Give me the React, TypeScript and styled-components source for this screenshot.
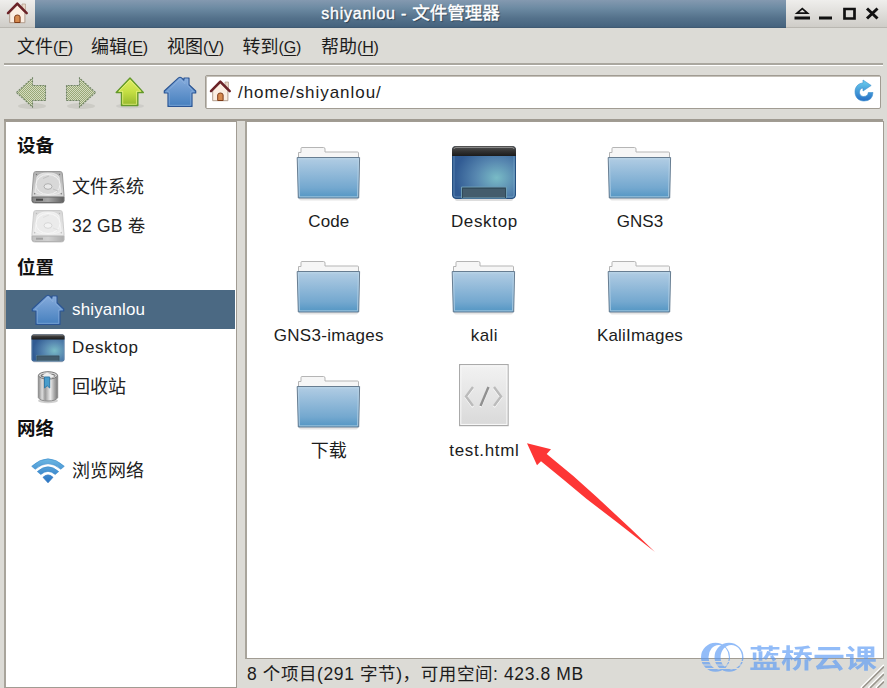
import React from "react";
import styled, { createGlobalStyle } from "styled-components";

const Global = createGlobalStyle`
  * { box-sizing: border-box; }
  body { margin: 0; background: #dcdad5; }
`;

const Window = styled.div`
  position: relative;
  width: 887px;
  height: 688px;
  overflow: hidden;
  display: flex;
  flex-direction: column;
  background: #dcdbd6;
  color: #1c1c1c;
  font-family: "Liberation Sans", "Noto Sans CJK SC", sans-serif;
  font-size: 17px;
  line-height: 24px;
  white-space: nowrap;
`;
const TitleBar = styled.header`
  flex: none;
  height: 28px;
  display: flex;
  border-bottom: 1px solid #b9b7b1;
  background: linear-gradient(#efeeec, #cfcdc8);
`;
const AppBadge = styled.div`
  width: 35px;
  padding: 1px 0 0 6px;
  line-height: 0;
`;
const TitleText = styled.div`
  flex: 1;
  height: 28px;
  text-align: center;
  line-height: 26px;
  font-size: 16px;
  letter-spacing: 0.75px;
  color: #fff;
  -webkit-text-stroke: 0.4px #fff;
  text-shadow: 1px 1px 1px #26394b;
  background: linear-gradient(#8499b0, #6c8aa2 30%, #54718b 65%, #46647f 94%, #3d566d);
`;
const TitleCjk = styled.span`
  font-size: 17.5px;
  letter-spacing: 0;
`;
const Controls = styled.div`
  width: 101px;
  line-height: 0;
`;
const MenuBar = styled.nav`
  flex: none;
  height: 38px;
  margin: 0 4px;
  padding: 7px 0 0 13px;
  display: flex;
  border-bottom: 1px solid #fff;
  box-shadow: inset 0 -2px #aaa79f;
`;
const MenuItem = styled.span<{ $w: number }>`
  width: ${(p) => p.$w}px;
  font-size: 18px;
`;
const Key = styled.span`
  font-size: 16px;
  letter-spacing: -0.2px;
  u { text-underline-offset: 2px; text-decoration-thickness: 1px; }
`;
const ToolBar = styled.div`
  flex: none;
  height: 55px;
  margin: 0 4px;
  padding: 9px 2px 0 11px;
  display: flex;
  border-bottom: 2px solid #9f9a91;
`;
const ToolIcon = styled.span<{ $w: number }>`
  width: ${(p) => p.$w}px;
  line-height: 0;
`;
const PathEntry = styled.div`
  flex: 1;
  height: 34px;
  display: flex;
  align-items: flex-start;
  padding: 3px 6px 0 3px;
  background: #fff;
  border: 1px solid #a19c93;
  border-radius: 2px;
  box-shadow: inset 1px 1px #c5c1b9;
`;
const PathText = styled.span`
  flex: 1;
  padding: 2px 0 0 6px;
  letter-spacing: 0.95px;
`;
const Body = styled.div`
  flex: 1;
  min-height: 0;
  display: flex;
  padding: 0 3px 0 4px;
`;
const SidePane = styled.aside`
  width: 233px;
  margin-right: 8px;
  padding-top: 1px;
  background: #fff;
  border: 1px solid #a19c93;
  border-left: 2px solid #a8a49b;
`;
const Heading = styled.h2`
  margin: 0;
  height: 45px;
  padding-left: 11px;
  font-size: 18.5px;
  font-weight: 700;
  line-height: 46px;
  color: #111;
`;
const PlaceRow = styled.div<{ $active?: boolean }>`
  height: 38.7px;
  margin-right: 1px;
  padding-left: 25px;
  display: flex;
  align-items: center;
  background: ${(p) => (p.$active ? "#4b6983" : "transparent")};
  color: ${(p) => (p.$active ? "#fff" : "#222")};
`;
const PlaceIcon = styled.span`
  display: flex;
  align-items: center;
  width: 34px;
  height: 34px;
  margin-right: 7px;
`;
const Label = styled.span<{ $size?: number; $gap?: number }>`
  font-size: ${(p) => p.$size ?? 17}px;
  letter-spacing: ${(p) => p.$gap ?? 0}px;
`;
const Main = styled.div`
  flex: 1;
  display: flex;
  flex-direction: column;
`;
const FilePane = styled.main`
  height: 538px;
  padding: 18px 0 0 4px;
  display: grid;
  grid-template-columns: repeat(3, 155.6px);
  grid-auto-rows: 114.3px;
  align-content: start;
  background: #fff;
  border: 1px solid #a19c93;
  border-left: 2px solid #a8a49b;
`;
const FileItem = styled.div`
  display: flex;
  flex-direction: column;
  align-items: center;
`;
const FileArt = styled.span`
  display: flex;
  flex-direction: column;
  justify-content: flex-end;
  height: 70px;
  padding-bottom: 8px;
  svg { flex: none; }
`;
const Status = styled.footer`
  flex: 1;
  padding: 3px 0 0 2px;
  font-size: 17.5px;
  letter-spacing: 0.6px;
`;
const Pointer = styled.svg`
  position: absolute;
  left: 520px;
  top: 435px;
`;
const Grip = styled.svg`
  position: absolute;
  right: 3px;
  bottom: 0;
`;
const Brand = styled.div`
  position: absolute;
  left: 700px;
  top: 641px;
  display: flex;
  color: #5a9af5;
  opacity: 0.66;
`;
const BrandText = styled.span`
  padding-left: 5px;
  font-family: "Noto Sans CJK SC", sans-serif;
  font-size: 32px;
  font-weight: 700;
  line-height: 32px;
  transform: scaleY(0.8);
`;

const Cottage = ({ size = 23 }: { size?: number }) => (
  <svg width={size} height={size} viewBox="0 0 23 23">
    <path d="M16 3h3.5v8H16z" fill="#ead8c8" stroke="#b39d8c" strokeWidth=".7" />
    <path d="M3.7 11.5 11.3 4l7.6 7.5v10.2H3.7z" fill="#fbeee2" stroke="#aa9484" strokeWidth=".9" />
    <path d="M2 12.2 11.3 2.7l9.4 9.5" fill="none" stroke="#6b2227" strokeWidth="2.5" strokeLinecap="round" strokeLinejoin="round" />
    <path d="M8.7 21.5V16q0-2 2.7-2t2.7 2v5.5z" fill="#d58a4f" stroke="#7e3c18" />
  </svg>
);

const BlueHome = () => (
  <svg width="34" height="34" viewBox="0 0 34 34">
    <defs>
      <linearGradient id="homeFill" x2="0" y2="1"><stop stopColor="#87acdc" /><stop offset="1" stopColor="#457fbe" /></linearGradient>
    </defs>
    <path d="M5 31.5V18H1.3V16L15.5 2.9Q17 1.6 18.6 2.9L21 5.2V3H26V9.8L32.7 16V18H29V31.5Z" fill="url(#homeFill)" stroke="#2b5594" strokeWidth="1.2" strokeLinejoin="round" />
    <path d="M6.2 30.3V16.8H3.6L17 4.2 22 8.8V4.2H24.8V10.4L30.5 16.8H27.8V30.3Z" fill="none" stroke="#91b4df" strokeOpacity=".6" />
  </svg>
);

const HatchArrow = ({ flip }: { flip?: boolean }) => (
  <svg width="34" height="36" viewBox="0 0 34 36">
    <defs>
      <pattern id="dots" width="2" height="2" patternUnits="userSpaceOnUse">
        <path fill="#d6dcc0" d="M0 0h2v2H0z" /><path fill="#98a877" d="M0 0h1v1H0zM1 1h1v1H1z" />
      </pattern>
    </defs>
    <ellipse cx="17" cy="31" rx="14" ry="3" fill="#8b8b84" opacity=".2" />
    <path transform={flip ? "translate(33 0) scale(-1 1)" : undefined} d="M1.5 17.5 17.5 3V10.5H30.5V25.5H17.5V32Z" fill="url(#dots)" stroke="#718466" strokeWidth="1.1" strokeDasharray="2 1" />
  </svg>
);

const UpArrow = () => (
  <svg width="34" height="36" viewBox="0 0 34 36">
    <defs>
      <linearGradient id="upFill" x2="0" y2="1"><stop stopColor="#dfed65" /><stop offset=".5" stopColor="#c5df43" /><stop offset="1" stopColor="#94b72c" /></linearGradient>
    </defs>
    <ellipse cx="17" cy="31" rx="14" ry="2.6" fill="#777" opacity=".15" />
    <path d="M17 3 30.3 17.5H24.8V30.5H8.5V17.5H3.2Z" fill="url(#upFill)" stroke="#63992a" strokeWidth="1.4" strokeLinejoin="round" />
    <path d="M17 5.1 27.8 16.3H23.6V29.3H9.7V16.3H5.9Z" fill="none" stroke="#eff78b" strokeOpacity=".7" />
  </svg>
);

const Reload = () => (
  <svg width="22" height="24" viewBox="0 0 22 24">
    <defs><linearGradient id="loadFill" x2="0" y2="1"><stop stopColor="#6bd0ef" /><stop offset="1" stopColor="#266fc5" /></linearGradient></defs>
    <path transform="translate(1 -.5)" d="M10 1.5 18.2 7 10 12.5V9.5C5 10 5.5 18 10.5 18Q15 17.8 15.3 14H20Q19.5 22.5 11 22.5C5.3 22.5 2 18.5 2 13.2 2 8.4 5.3 4.7 10 4.5Z" fill="url(#loadFill)" stroke="#3d91cf" strokeWidth=".6" />
  </svg>
);

const WindowButtons = () => (
  <svg width="101" height="27" viewBox="0 0 101 27" fill="none" stroke="#111">
    <path d="M11 13.2 16.3 8.6 21.5 13.2Z" strokeWidth="1.7" />
    <path d="M8.5 18H24M33 18H46" strokeWidth="3" />
    <path d="M58.5 9H68.5V18.5H58.5Z" strokeWidth="2.7" />
    <path d="M81 8.5 91.5 18.5M91.5 8.5 81 18.5" strokeWidth="3" />
  </svg>
);

const Disk = ({ pale }: { pale?: boolean }) => (
  <svg width="34" height="34" viewBox="0 0 34 34" opacity={pale ? 0.5 : 1}>
    <defs>
      <linearGradient id="diskTop" x2="0" y2="1"><stop stopColor="#b0b0b0" /><stop offset="1" stopColor="#e4e4e4" /></linearGradient>
      <linearGradient id="diskFront"><stop stopColor="#858585" /><stop offset=".5" stopColor="#a6a6a6" /><stop offset="1" stopColor="#606060" /></linearGradient>
    </defs>
    <path d="M4.5 1.5H29.5Q31.2 1.5 31.4 4L33 25V31Q33 33 30.5 33H3.5Q1 33 1 31V25L2.6 4Q2.8 1.5 4.5 1.5Z" fill="url(#diskTop)" stroke="#999" />
    <path d="M1.2 27H32.8V30.5Q32.8 32.5 30.5 32.5H3.5Q1.2 32.5 1.2 30.5Z" fill="url(#diskFront)" stroke="#686868" />
    <path d="M5 29.7h7" stroke="#444" strokeWidth="2" />
    <path d="M6 7Q8.5 2.8 17 3 25.5 2.8 28 7L30 22Q27 25 17 25T4 22Z" fill="#dcdcdc" stroke="#f0f0f0" strokeWidth=".7" />
    <ellipse cx="17" cy="14.5" rx="12" ry="10" fill="#d8d8d8" stroke="#f2f2f2" />
    <ellipse cx="17" cy="16.5" rx="4" ry="2.8" fill="#e8e8e8" stroke="#b0b0b0" />
    <path d="M12 8.5 18 6M22 19 27 21" stroke="#c2c2c2" />
    <g fill="#777"><circle cx="5.5" cy="4.5" r=".7" /><circle cx="28.5" cy="4.5" r=".7" /><circle cx="3.7" cy="23.8" r=".7" /><circle cx="30.3" cy="23.8" r=".7" /></g>
  </svg>
);

const DesktopArt = ({ width = 66, height = 57 }: { width?: number; height?: number }) => (
  <svg width={width} height={height} viewBox="0 0 66 57" preserveAspectRatio="none">
    <defs>
      <radialGradient id="deskFill" cx=".7" cy=".6" r=".66"><stop stopColor="#79bbc6" /><stop offset=".5" stopColor="#5787b0" /><stop offset="1" stopColor="#315b93" /></radialGradient>
      <linearGradient id="deskBar" x2="0" y2="1"><stop stopColor="#555" /><stop offset=".5" stopColor="#343434" /><stop offset="1" stopColor="#1b1b1b" /></linearGradient>
    </defs>
    <rect x="4" y="51" width="58" height="5" rx="2" fill="#555" opacity=".2" />
    <rect x="1.5" y="1.5" width="63" height="52" rx="3.5" fill="url(#deskFill)" stroke="#254f7f" />
    <rect x="3" y="3" width="60" height="49" rx="2" fill="none" stroke="#9fc9df" strokeOpacity=".35" />
    <path d="M1 11V5Q1 1 5 1H61Q65 1 65 5V11Z" fill="url(#deskBar)" />
    <path d="M3 4Q3 2.5 5 2.5H61Q63 2.5 63 4" fill="none" stroke="#888" />
    <path d="M10.5 53V42H55.5V53Z" fill="#435c6c" stroke="#6d9cb4" />
    <path d="M11.5 53V43.3H54.5V53" fill="none" stroke="#304958" />
  </svg>
);

const Trash = () => (
  <svg width="34" height="34" viewBox="0 0 34 34">
    <defs><linearGradient id="canFill"><stop stopColor="#888" /><stop offset=".2" stopColor="#ddd" /><stop offset=".35" stopColor="#999" /><stop offset=".62" stopColor="#ececec" /><stop offset=".82" stopColor="#aaa" /><stop offset="1" stopColor="#777" /></linearGradient></defs>
    <ellipse cx="17" cy="30.7" rx="10" ry="2.5" fill="#444" opacity=".25" />
    <path d="M7.3 5.5V27.5Q9 31 17 31T26.7 27.5V5.5Z" fill="url(#canFill)" stroke="#8d8d8d" />
    <ellipse cx="17" cy="5.4" rx="9.5" ry="3.7" fill="#d6d6d6" stroke="#777" />
    <ellipse cx="17" cy="5.7" rx="7.5" ry="2.3" fill="#777" />
    <path d="M11 5.5 16 2.5 24 6 20 8 14 7Z" fill="#eee" />
    <path d="M13.5 7H18.7V18L16.2 15.7 13.5 18Z" fill="#489dcc" stroke="#337aa7" />
  </svg>
);

const Wifi = () => (
  <svg width="34" height="34" viewBox="0 0 34 34" fill="none">
    <defs><linearGradient id="waveFill" gradientUnits="userSpaceOnUse" x1="0" y1="3" x2="0" y2="30"><stop stopColor="#70bce5" /><stop offset="1" stopColor="#246fc1" /></linearGradient></defs>
    <path d="M.7 12.3Q17-2.7 33.3 12.3L29.8 15.2Q17 4.2 4.2 15.2Z" fill="url(#waveFill)" stroke="#398acb" strokeWidth=".6" />
    <path d="M6.3 17.6Q17 8 27.7 17.6L24.2 20.5Q17 14.3 9.8 20.5Z" fill="url(#waveFill)" stroke="#398acb" strokeWidth=".6" />
    <path d="M12 23.3Q17 18.5 22 23.3L17 28.8Z" fill="url(#waveFill)" stroke="#256fbb" strokeWidth=".7" />
  </svg>
);

const Folder = () => (
  <svg width="66" height="57" viewBox="0 0 66 57">
    <defs>
      <linearGradient id="folderFill" x2="0" y2="1"><stop stopColor="#b2cde4" /><stop offset=".75" stopColor="#74a8cf" /><stop offset="1" stopColor="#5295c3" /></linearGradient>
    </defs>
    <rect x="3" y="51" width="59" height="4.5" rx="2" fill="#555" opacity=".16" />
    <path d="M2.5 14V7.5H5V3.5Q5 2.5 6 2.5H27.5Q29 2.5 29 4V7H61.5Q62.5 7 62.5 8V14Z" fill="#f6f6f6" stroke="#b5b5b5" />
    <path d="M1.2 12.5H63.6L62.7 53H2.3Z" fill="url(#folderFill)" stroke="#677d91" />
    <path d="M2.4 13.8H62.4L61.5 51.8H3.5Z" fill="none" stroke="#c0d9ea" strokeOpacity=".65" />
  </svg>
);

const HtmlDoc = () => (
  <svg width="66" height="70" viewBox="0 0 66 70">
    <defs><linearGradient id="docFill" x2="0" y2="1"><stop stopColor="#f2f2f2" /><stop offset="1" stopColor="#d9d9d9" /></linearGradient></defs>
    <rect x="8.6" y="3.6" width="48.5" height="61" fill="url(#docFill)" stroke="#aaa" strokeWidth="1.2" />
    <rect x="9.8" y="4.8" width="46.1" height="58.6" fill="none" stroke="#fafafa" />
    <g fill="none" transform="translate(0 1)" stroke="#fff" strokeWidth="2.3"><path d="M22 26 15 35.5 22 45M43 26 50 35.5 43 45M37.5 26 29.5 45" /></g>
    <g fill="none" strokeWidth="2.4"><path d="M22 26 15 35.5 22 45M43 26 50 35.5 43 45" stroke="#bbb" /><path d="M37.5 26 29.5 45" stroke="#909090" /></g>
  </svg>
);

const menus = [
  ["文件", "F", 74], ["编辑", "E", 76], ["视图", "V", 75.5], ["转到", "G", 78.5], ["帮助", "H", 70],
] as const;

const files = [
  { name: "Code", gap: 0.1, art: <Folder /> },
  { name: "Desktop", gap: 0.65, art: <DesktopArt /> },
  { name: "GNS3", gap: 0.1, art: <Folder /> },
  { name: "GNS3-images", gap: 0.3, art: <Folder /> },
  { name: "kali", gap: 0.4, art: <Folder /> },
  { name: "KaliImages", gap: 0.2, art: <Folder /> },
  { name: "下载", size: 18, art: <Folder /> },
  { name: "test.html", gap: 0.65, art: <HtmlDoc /> },
];

export default function App() {
  return (
    <>
      <Global />
      <Window>
        <TitleBar>
          <AppBadge><Cottage /></AppBadge>
          <TitleText>shiyanlou - <TitleCjk>文件管理器</TitleCjk></TitleText>
          <Controls><WindowButtons /></Controls>
        </TitleBar>
        <MenuBar>
          {menus.map(([text, key, w]) => (
            <MenuItem key={key} $w={w}>{text}<Key>(<u>{key}</u>)</Key></MenuItem>
          ))}
        </MenuBar>
        <ToolBar>
          <ToolIcon $w={49}><HatchArrow /></ToolIcon>
          <ToolIcon $w={49}><HatchArrow flip /></ToolIcon>
          <ToolIcon $w={50}><UpArrow /></ToolIcon>
          <ToolIcon $w={42}><BlueHome /></ToolIcon>
          <PathEntry><Cottage /><PathText>/home/shiyanlou/</PathText><Reload /></PathEntry>
        </ToolBar>
        <Body>
          <SidePane>
            <Heading>设备</Heading>
            <PlaceRow><PlaceIcon><Disk /></PlaceIcon><Label $size={18}>文件系统</Label></PlaceRow>
            <PlaceRow><PlaceIcon><Disk pale /></PlaceIcon><Label $size={17.5} $gap={0.2}>32 GB 卷</Label></PlaceRow>
            <Heading>位置</Heading>
            <PlaceRow $active><PlaceIcon><BlueHome /></PlaceIcon><Label $gap={0.15}>shiyanlou</Label></PlaceRow>
            <PlaceRow><PlaceIcon><DesktopArt width={34} height={29} /></PlaceIcon><Label $gap={0.6}>Desktop</Label></PlaceRow>
            <PlaceRow><PlaceIcon><Trash /></PlaceIcon><Label $size={18}>回收站</Label></PlaceRow>
            <Heading>网络</Heading>
            <PlaceRow><PlaceIcon><Wifi /></PlaceIcon><Label $size={18}>浏览网络</Label></PlaceRow>
          </SidePane>
          <Main>
            <FilePane>
              {files.map((f) => (
                <FileItem key={f.name}>
                  <FileArt>{f.art}</FileArt>
                  <Label $size={f.size} $gap={f.gap}>{f.name}</Label>
                </FileItem>
              ))}
            </FilePane>
            <Status>8 个项目(291 字节)，可用空间: 423.8 MB</Status>
          </Main>
        </Body>
        <Pointer width="140" height="122" viewBox="0 0 140 122">
          <path d="M7 8.3 31 14.3 26.7 19 53.3 41 76.7 62 110 93 135 117 96.7 87 66.7 64 43.3 44.5 21 26.3 17 30.3Z" fill="#fd3635" />
        </Pointer>
        <Brand>
          <svg width="44" height="34" viewBox="0 0 44 34">
            <defs>
              <mask id="rings">
                <path d="M0 0h44v34H0z" fill="#fff" />
                <path d="M0 20.5h44M0 24h44M0 27.5h44" stroke="#000" strokeWidth="1" />
              </mask>
            </defs>
            <g mask="url(#rings)" fill="currentColor">
              <path fillRule="evenodd" d="M15.5 1.7a14.5 14.5 0 1 0 0 29 14.5 14.5 0 0 0 0-29Zm3.2 2.3a10.2 12.2 0 1 1 0 24.4 10.2 12.2 0 0 1 0-24.4Z" />
              <path fillRule="evenodd" d="M29 1.7a14.5 14.5 0 1 0 0 29 14.5 14.5 0 0 0 0-29Zm2.3 2.3a10.7 12.2 0 1 1 0 24.4 10.7 12.2 0 0 1 0-24.4Z" />
            </g>
          </svg>
          <BrandText>蓝桥云课</BrandText>
        </Brand>
        <Grip width="24" height="24" viewBox="0 0 24 24" fill="none">
          <path d="M1 24 24 1M8.5 24 24 8.5M16 24 24 16" stroke="#fff" strokeWidth="2" />
          <path d="M2.5 24 24 2.5M10 24 24 10M17.5 24 24 17.5" stroke="#99958c" strokeWidth="1.6" />
        </Grip>
      </Window>
    </>
  );
}
